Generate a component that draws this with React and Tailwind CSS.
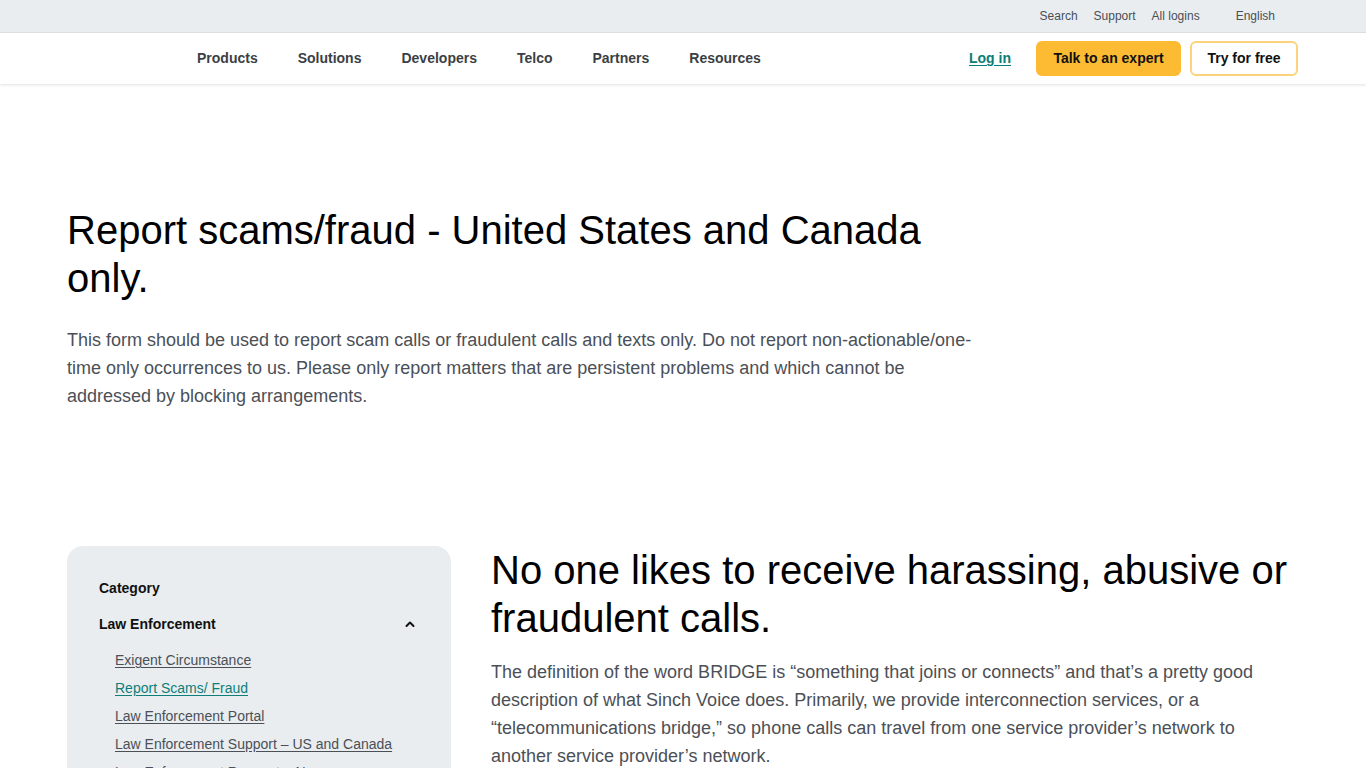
import React from "react";

const font = { fontFamily: '"Liberation Sans", Arial, sans-serif' };

function ChevronUp() {
  return (
    <svg width="12" height="12" viewBox="0 0 12 12" fill="none">
      <path d="M2.5 8 L6 4.5 L9.5 8" stroke="#111" strokeWidth="2" strokeLinecap="round" strokeLinejoin="round" />
    </svg>
  );
}

export default function App() {
  const nav = ["Products", "Solutions", "Developers", "Telco", "Partners", "Resources"];
  const links = [
    ["Exigent Circumstance", false],
    ["Report Scams/ Fraud", true],
    ["Law Enforcement Portal", false],
    ["Law Enforcement Support – US and Canada", false],
    ["Law Enforcement Request – Non-", false],
  ];
  return (
    <div className="min-h-screen bg-white text-black" style={font}>
      <div className="h-[33px] bg-[#e9edf0] border-b border-[#dfe3e6]">
        <div className="flex h-full items-center justify-end pr-[91px] text-[12px] text-[#4a4f55]">
          <a className="mr-4">Search</a>
          <a className="mr-4">Support</a>
          <a className="mr-9">All logins</a>
          <a>English</a>
        </div>
      </div>
      <header className="h-[51px] bg-white shadow-[0_1px_3px_rgba(0,0,0,0.12)] relative z-10">
        <div className="flex h-full items-center pl-[197px] pr-[68px]">
          <nav className="flex items-center gap-[40px] text-[14px] font-bold text-[#3b3f45]">
            {nav.map((n) => (
              <a key={n}>{n}</a>
            ))}
          </nav>
          <div className="ml-auto flex items-center">
            <a className="mr-[25px] text-[14px] font-bold text-[#0a7d78] underline underline-offset-2">Log in</a>
            <button className="h-[35px] w-[145px] rounded-md bg-[#fdbb33] text-[14px] font-bold text-[#111]">
              Talk to an expert
            </button>
            <button className="ml-[9px] h-[35px] w-[108px] rounded-md border-2 border-[#fcd27a] bg-white text-[14px] font-bold text-[#111]">
              Try for free
            </button>
          </div>
        </div>
      </header>

      <main className="px-[67px]">
        <section className="pt-[122px]">
          <h1 className="max-w-[880px] text-[40px] leading-[48px] font-normal text-black">
            Report scams/fraud - United States and Canada only.
          </h1>
          <p className="mt-6 max-w-[912px] text-[18px] leading-[28px] text-[#4b5057]">
            This form should be used to report scam calls or fraudulent calls and texts only. Do not report non-actionable/one-time only occurrences to us. Please only report matters that are persistent problems and which cannot be addressed by blocking arrangements.
          </p>
        </section>

        <section className="mt-[136px] flex gap-10">
          <aside className="w-[384px] shrink-0 rounded-2xl bg-[#e9edf0] px-8 pt-8 pb-8">
            <div className="text-[14px] leading-5 font-bold text-[#111]">Category</div>
            <div className="mt-4 flex items-center justify-between pr-[3px] text-[14px] leading-5 font-bold text-[#111]">
              <span>Law Enforcement</span>
              <ChevronUp />
            </div>
            <ul className="mt-4 pl-4 flex flex-col gap-2">
              {links.map(([t, active]) => (
                <li key={t} className="text-[14px] leading-5">
                  <a className={"underline underline-offset-2 " + (active ? "text-[#0d7f79]" : "text-[#4b5057]")}>{t}</a>
                </li>
              ))}
            </ul>
          </aside>
          <div className="flex-1">
            <h2 className="text-[40px] leading-[48px] font-normal text-black">
              No one likes to receive harassing, abusive or fraudulent calls.
            </h2>
            <p className="mt-4 text-[18px] leading-[28px] text-[#4b5057]">
              The definition of the word BRIDGE is “something that joins or connects” and that’s a pretty good description of what Sinch Voice does. Primarily, we provide interconnection services, or a “telecommunications bridge,” so phone calls can travel from one service provider’s network to another service provider’s network.
            </p>
          </div>
        </section>
      </main>
    </div>
  );
}
